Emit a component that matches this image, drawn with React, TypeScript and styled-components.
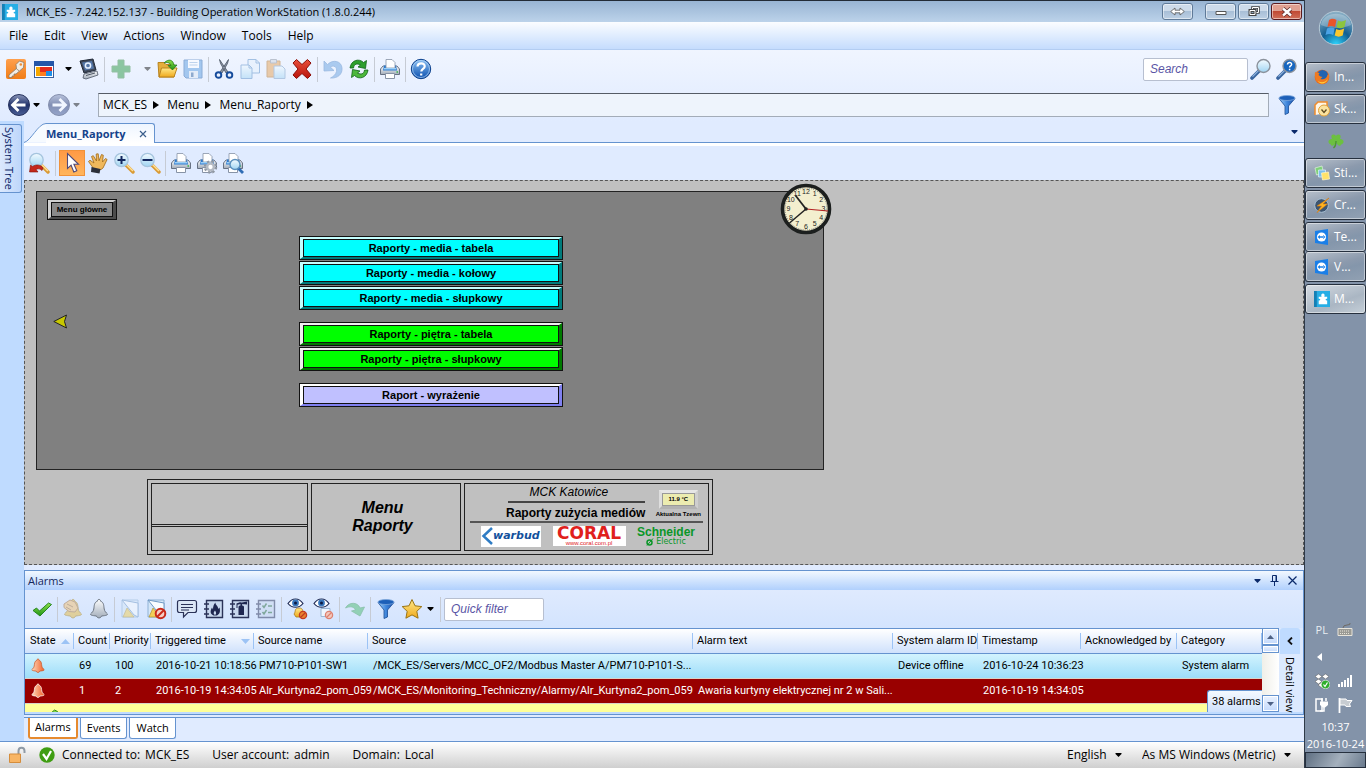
import React from "react";
import styled, { createGlobalStyle, css } from "styled-components";

const ui = `"Open Sans", "Noto Sans", sans-serif`;
const data = `Roboto, "Liberation Sans", sans-serif`;
const arial = `"Liberation Sans", Arial, sans-serif`;
const line = "#6593cf";

const Global = createGlobalStyle`
  *, *::before, *::after { box-sizing: border-box; }
  html, body { margin: 0; padding: 0; }
  body { font: 12px/16px ${ui}; color: #000; background: #e0ebff; }
  button, input, select { font: inherit; color: inherit; margin: 0; }
  button { background: none; border: 0; padding: 0; white-space: nowrap; }
  svg { display: block; flex: none; }
`;

/* ---------- shell ---------- */
const Screen = styled.div`
  display: flex;
  min-height: 100vh;
`;
const Workstation = styled.div`
  flex: 1;
  min-width: 0;
  display: flex;
  flex-direction: column;
  border-right: 1px solid #2f3a48;
`;
const TitleBar = styled.header`
  height: 22px;
  display: flex;
  align-items: center;
  padding: 0 2px 0 2px;
  gap: 8px;
  border-top: 1px solid #222b36;
  background: linear-gradient(#98b4d3, #bcd3ea);
`;
const Title = styled.h1`
  flex: 1;
  margin: 0;
  font-size: 11px;
  line-height: 16px;
  font-weight: 400;
`;
const WindowButtons = styled.div`
  display: flex;
  gap: 2px;
`;
const WindowButton = styled.button<{ $close?: boolean; $apart?: boolean }>`
  width: 31px;
  height: 17px;
  display: flex;
  align-items: center;
  justify-content: center;
  border: 1px solid ${(p) => (p.$close ? "#5b1a1e" : "#5f7a98")};
  border-radius: 3px;
  margin-right: ${(p) => (p.$apart ? "10px" : "0")};
  box-shadow: inset 0 0 0 1px rgba(255, 255, 255, 0.5);
  background: ${(p) =>
    p.$close
      ? "linear-gradient(#e0a091 0 45%, #c04a35 50%, #d0705a)"
      : "linear-gradient(#cddbea 0 45%, #a9bfd7 50%, #bdd0e4)"};
`;
const MenuBar = styled.nav`
  height: 28px;
  display: flex;
  align-items: center;
  gap: 16px;
  padding: 0 9px;
  border-bottom: 1px solid #b3cdf2;
  background: linear-gradient(#fbfdff, #c5dcfd);
`;
const Toolbars = styled.div`
  background: linear-gradient(#f0f5ff, #e0ebff);
`;
const ToolRow = styled.div<{ $pad: number; $height: number }>`
  display: flex;
  align-items: center;
  height: ${(p) => p.$height}px;
  padding: 0 4px 0 ${(p) => p.$pad}px;
`;
const IconPair = styled.div`
  display: flex;
  gap: 2px;
`;
const IconButton = styled.button<{ $active?: boolean; $dim?: boolean }>`
  width: 26px;
  height: 26px;
  flex: none;
  display: flex;
  align-items: center;
  justify-content: center;
  opacity: ${(p) => (p.$dim ? 0.5 : 1)};
  ${(p) =>
    p.$active &&
    css`
      border: 1px solid #f0923a;
      background: linear-gradient(#ff9a45, #ffb55c);
    `}
`;
const CaretButton = styled.button<{ $w?: number; $dim?: boolean }>`
  width: ${(p) => p.$w ?? 12}px;
  height: 24px;
  flex: none;
  display: flex;
  align-items: center;
  justify-content: flex-end;
  padding-right: 3px;
  opacity: ${(p) => (p.$dim ? 0.45 : 1)};
`;
const Divider = styled.span<{ $wide?: boolean }>`
  width: 1px;
  height: 25px;
  flex: none;
  margin: 0 ${(p) => (p.$wide ? 3 : 2)}px;
  background: #c6cbd4;
`;
const Spacer = styled.span`
  flex: 1;
`;
const TextBox = styled.input<{ $w: number }>`
  width: ${(p) => p.$w}px;
  height: 23px;
  border: 1px solid #b7bfd0;
  border-radius: 2px;
  padding: 0 6px;
  background: #fff;
  font: italic 12px/16px ${arial};
  &::placeholder { color: #5a55a5; opacity: 1; }
`;
const History = styled.div`
  display: flex;
  align-items: center;
  margin-right: 4px;
`;
const NavButton = styled(IconButton)`
  width: 24px;
  height: 24px;
`;
const Address = styled.nav`
  flex: 1;
  display: flex;
  align-items: center;
  height: 24px;
  margin: 0 5px 0 11px;
  padding-left: 4px;
  border: 1px solid #a3acb8;
  border-top-color: #555c66;
  background: #eef4fc;
`;
const Crumb = styled.button`
  display: flex;
  align-items: center;
  gap: 6px;
  margin-right: 8px;
`;

/* ---------- workspace ---------- */
const Body = styled.div`
  flex: 1;
  display: flex;
  min-height: 0;
`;
const Rail = styled.aside`
  width: 24px;
  flex: none;
  padding-top: 3px;
  background: #bfdbff;
`;
const RailTab = styled.button`
  width: 22px;
  height: 69px;
  display: flex;
  align-items: center;
  justify-content: center;
  padding-right: 3px;
  border: 1px solid ${line};
  border-left: 0;
  border-radius: 0 3px 3px 0;
  background: linear-gradient(90deg, #dce9fd, #bdd6fb);
  color: #0b1f66;
  font-size: 11px;
  writing-mode: vertical-rl;
`;
const Content = styled.main`
  flex: 1;
  min-width: 0;
  display: flex;
  flex-direction: column;
`;
const DocTabs = styled.div`
  height: 25px;
  display: flex;
  align-items: flex-end;
  border-bottom: 3px solid #fff;
`;
const DocTab = styled.div`
  display: flex;
  align-items: center;
  gap: 13px;
  width: 109px;
  height: 20px;
  border: solid ${line};
  border-width: 1px 1px 0 0;
  border-radius: 0 3px 0 0;
  background: linear-gradient(#eef5ff, #fff);
`;
const DocTabName = styled.button`
  color: #15428b;
  font-size: 11px;
  font-weight: 700;
`;
const TabFill = styled.div`
  flex: 1;
  height: 22px;
  display: flex;
  align-items: center;
  justify-content: flex-end;
  padding-right: 6px;
  border-bottom: 1px solid ${line};
`;
const Canvas = styled.section`
  position: relative;
  flex: 1;
  padding: 10px 11px 8px;
  border: 1px dashed #555;
  background: #c0c0c0;
  font-family: ${arial};
`;
const Panel = styled.div`
  width: 788px;
  min-height: 279px;
  border: 1px solid #222;
  background: #808080;
`;
const PanelGrid = styled.div`
  display: grid;
  grid-template-columns: 1fr 264px 1fr;
  align-items: center;
  margin-top: 16px;
  padding-left: 2px;
`;
const PanelTop = styled.div`
  display: flex;
  padding: 7px 10px 0;
`;
const ArrowButton = styled.button`
  justify-self: start;
  margin-left: 14px;
`;
const ButtonStack = styled.div`
  display: flex;
  flex-direction: column;
  gap: 12px;
`;
const ButtonGroup = styled.div`
  display: flex;
  flex-direction: column;
  gap: 1px;
`;
const Bevel = styled.button<{ $face: string; $lit: string; $shade: string; $small?: boolean }>`
  width: ${(p) => (p.$small ? "70px" : "100%")};
  height: ${(p) => (p.$small ? 21 : 24)}px;
  display: flex;
  border: 1px solid #111;
  font: 700 ${(p) => (p.$small ? "8px" : "11px")} / 16px ${arial};
  & > span {
    flex: 1;
    display: flex;
    border-style: solid;
    border-width: 2px 3px;
    border-color: ${(p) => `${p.$lit} ${p.$shade} ${p.$shade} ${p.$lit}`};
  }
  & > span > span {
    flex: 1;
    display: flex;
    align-items: center;
    justify-content: center;
    border: 1px solid #111;
    background: ${(p) => p.$face};
  }
`;
const Clock = styled.div`
  position: absolute;
  left: 755px;
  top: 2px;
`;
const TitleBlock = styled.div`
  display: flex;
  gap: 3px;
  width: 566px;
  height: 76px;
  margin: 9px 0 0 111px;
  padding: 3px;
  border: 1px solid #222;
`;
const Cell = styled.div<{ $w?: number }>`
  flex: ${(p) => (p.$w ? `0 0 ${p.$w}px` : "1")};
  display: flex;
  flex-direction: column;
  border: 1px solid #222;
`;
const Rule = styled.div`
  height: 3px;
  margin-top: 40px;
  border: solid #222;
  border-width: 1px 0;
`;
const SheetName = styled.h2`
  margin: auto;
  padding-right: 7px;
  font: italic 700 16px/18px ${arial};
  text-align: center;
`;
const Summary = styled.div`
  display: flex;
  justify-content: space-between;
  margin: 0 5px;
  padding: 0 2px 0 36px;
  height: 39px;
  border-bottom: 2px solid #555;
`;
const Heading = styled.div`
  display: flex;
  flex-direction: column;
  align-items: flex-end;
  font: 700 12px/20px ${arial};
`;
const Site = styled.span`
  width: 137px;
  padding-right: 16px;
  border-bottom: 2px solid #444;
  font: italic 400 12px/17px ${arial};
  text-align: center;
`;
const Gauge = styled.div`
  display: flex;
  flex-direction: column;
  align-items: center;
  padding-top: 6px;
  font: 700 6px/10px ${arial};
`;
const GaugeBox = styled.div`
  width: 39px;
  height: 19px;
  border: 3px solid #dcdcdc;
  border-color: #e6e6e6 #cfcfcf #b2b2b2 #dedede;
  background: #ececb0;
  box-shadow: inset 0 0 0 1px #999;
  line-height: 13px;
  text-align: center;
`;
const Logos = styled.div`
  display: flex;
  align-items: center;
  justify-content: space-between;
  padding: 0 13px 0 16px;
  height: 26px;
`;
const Warbud = styled.div`
  width: 60px;
  height: 21px;
  display: flex;
  align-items: center;
  background: #fff;
  color: #12509c;
  font: italic 700 11px/12px "DejaVu Sans", sans-serif;
`;
const Coral = styled.div`
  width: 73px;
  height: 20px;
  background: #fff;
  color: #e0201c;
  text-align: center;
  font: 700 17px/14px "DejaVu Sans", sans-serif;
  & > small { display: block; font: 6px/6px ${arial}; }
`;
const Schneider = styled.div`
  width: 58px;
  color: #0a9628;
  font: 700 12px/11px ${arial};
  & > small {
    display: flex;
    justify-content: center;
    align-items: center;
    gap: 2px;
    font: 8px/8px "DejaVu Sans", sans-serif;
  }
`;

/* ---------- alarms ---------- */
const AlarmPane = styled.section`
  margin-top: 5px;
  border: 1px solid ${line};
  background: #bfdbff;
  padding-bottom: 2px;
`;
const PaneTitle = styled.div`
  height: 19px;
  display: flex;
  align-items: center;
  gap: 9px;
  padding: 0 6px 0 3px;
  background: linear-gradient(#f2f8ff, #b0d0fd);
  color: #15285c;
  & > h2 { flex: 1; margin: 0; font: inherit; font-size: 11px; }
`;
const PaneTools = styled(ToolRow)`
  background: linear-gradient(#dfeafe, #d3e4fe);
`;
const ListArea = styled.div`
  display: flex;
  height: 84px;
`;
const TableWrap = styled.div`
  position: relative;
  flex: 1;
  min-width: 0;
  overflow: hidden;
`;
const Table = styled.table`
  width: 100%;
  table-layout: fixed;
  border-collapse: separate;
  border-spacing: 0;
  font: 11px/14px ${data};
  white-space: nowrap;
`;
const Th = styled.th<{ $w?: number }>`
  width: ${(p) => (p.$w ? `${p.$w}px` : "auto")};
  height: 26px;
  padding: 0;
  border: solid ${line};
  border-width: 1px 0;
  background: linear-gradient(#fff, #cfe1fc);
  font-weight: 400;
  text-align: left;
  & > span {
    display: flex;
    align-items: center;
    justify-content: space-between;
    height: 16px;
    padding: 0 3px 0 4px;
    border-right: 1px solid #9cc3f5;
  }
  &:first-child > span { padding-left: 5px; }
`;
const Row = styled.tr<{ $kind: "system" | "critical" | "ok" }>`
  height: 25px;
  color: ${(p) => (p.$kind === "critical" ? "#fff" : "#000")};
  background: ${(p) =>
    p.$kind === "system"
      ? "linear-gradient(#d2f3fe, #9bdcf9)"
      : p.$kind === "critical"
        ? "#990000"
        : "#ffff99"};
  & > td {
    padding: 0 0 0 5px;
    border-bottom: 1px solid #d9d3c8;
  }
`;
const OkMark = styled.span`
  display: block;
  padding-left: 7px;
`;
const CountTip = styled.div`
  position: absolute;
  right: 0;
  bottom: 0;
  width: 55px;
  height: 22px;
  padding-left: 4px;
  border: solid ${line};
  border-width: 1px 0 0 1px;
  border-radius: 3px 0 0 0;
  background: linear-gradient(#f4f9ff, #cfe1fc);
  font: 11px/22px ${data};
  white-space: nowrap;
`;
const Scroll = styled.div`
  width: 17px;
  flex: none;
  display: flex;
  flex-direction: column;
  background: linear-gradient(90deg, #f0efe8, #fff);
`;
const ScrollPart = styled.button<{ $h: number }>`
  height: ${(p) => p.$h}px;
  display: flex;
  align-items: center;
  justify-content: center;
  border: 1px solid ${line};
  box-shadow: inset 0 0 0 1px #fff;
  background: linear-gradient(#eaf2ff, #c4dafc);
`;
const DetailStrip = styled.aside`
  width: 24px;
  flex: none;
  display: flex;
  flex-direction: column;
  align-items: center;
  padding-right: 3px;
  background: #dce9fe;
`;
const DetailToggle = styled.button`
  width: 20px;
  height: 26px;
  flex: none;
  display: flex;
  align-items: center;
  justify-content: center;
  border-radius: 3px 3px 0 0;
  background: #bfdbff;
`;
const DetailLabel = styled.span`
  margin-top: 3px;
  font-size: 11px;
  writing-mode: vertical-rl;
  white-space: nowrap;
`;
const BottomTabs = styled.div`
  height: 24px;
  display: flex;
  gap: 2px;
  margin-top: 2px;
  padding: 0 4px 2px;
  border-top: 1px solid ${line};
  background: #e0ebff;
`;
const BottomTab = styled.button<{ $on?: boolean }>`
  padding: 0 ${(p) => (p.$on ? 5 : 6)}px 1px;
  height: 21px;
  border: solid ${(p) => (p.$on ? "#e68a2e" : line)};
  border-width: ${(p) => (p.$on ? "0 2px 2px" : "0 1px 1px")};
  border-radius: 0 0 3px 3px;
  background: #fff;
  font-size: 11px;
`;
const StatusBar = styled.footer`
  height: 27px;
  display: flex;
  align-items: center;
  padding: 0 13px 0 8px;
  border-top: 1px solid ${line};
  background: linear-gradient(#fff, #cfcfcf);
`;
const StatusItem = styled.span`
  display: flex;
  gap: 5px;
  margin-right: 23px;
  white-space: nowrap;
`;
const StatusIcons = styled.span`
  display: flex;
  align-items: center;
  gap: 13px;
  margin-right: 7px;
`;
const Picker = styled.label`
  display: flex;
  align-items: center;
  gap: 8px;
  margin-left: 20px;
  & > select {
    appearance: none;
    padding: 0;
    border: 0;
    background: none;
  }
`;

/* ---------- taskbar ---------- */
const Taskbar = styled.aside`
  width: 61px;
  flex: none;
  display: flex;
  flex-direction: column;
  background: #8393a9;
  color: #fff;
  font-size: 12px;
`;
const Orb = styled.button`
  height: 62px;
  display: flex;
  justify-content: center;
  padding-top: 10px;
`;
const Tasks = styled.div`
  display: flex;
  flex-direction: column;
  gap: 2px;
`;
const Task = styled.button<{ $bare?: boolean; $front?: boolean; $joined?: boolean }>`
  height: 30px;
  display: flex;
  align-items: center;
  gap: 4px;
  padding-left: 8px;
  ${(p) =>
    p.$bare
      ? css`
          justify-content: center;
          padding: 0;
        `
      : css`
          border: 1px solid #26303e;
          border-radius: 3px;
          box-shadow: inset 0 0 0 1px rgba(255, 255, 255, 0.45);
          background: ${p.$front
            ? "linear-gradient(160deg, #d5dbe2, #aab6c3 60%, #c5cfd8)"
            : "linear-gradient(165deg, #b7c0cb, #8c9aad 45%, #8496ab 60%, #92a1b3)"};
        `}
  ${(p) =>
    p.$joined &&
    css`
      margin-top: -2px;
      border-top: 0;
    `}
`;
const Tray = styled.div`
  display: grid;
  grid-template-columns: 1fr 1fr;
  grid-template-rows: 30px 24px 24px 24px;
  justify-items: center;
  align-items: center;
  margin-top: auto;
  padding: 0 9px 0 5px;
`;
const TrayText = styled.span`
  font-size: 11px;
  color: #e8edf2;
`;
const Stamp = styled.time`
  display: flex;
  flex-direction: column;
  align-items: center;
  margin-top: 1px;
  font-size: 11px;
  line-height: 17px;
  white-space: nowrap;
`;
const Peek = styled.button`
  height: 16px;
  border: 1px solid #26303e;
  background: linear-gradient(120deg, #5f6f82, #a4b0bd 55%, #6a7a8d);
`;

/* ---------- icons ---------- */
const DefsSvg = styled.svg`
  position: absolute;
`;
const Defs = () => (
  <DefsSvg width="0" height="0" aria-hidden="true">
    <defs>
      <linearGradient id="blue" x2="0" y2="1"><stop stopColor="#8cc2f5" /><stop offset="1" stopColor="#0b4fae" /></linearGradient>
      <linearGradient id="navy" x2="0" y2="1"><stop stopColor="#8b97bb" /><stop offset=".5" stopColor="#22336b" /><stop offset="1" stopColor="#4a5f96" /></linearGradient>
      <linearGradient id="gold" x2="0" y2="1"><stop stopColor="#ffe98a" /><stop offset="1" stopColor="#efa91c" /></linearGradient>
      <linearGradient id="orange" x2="0" y2="1"><stop stopColor="#ffa04d" /><stop offset="1" stopColor="#f07d18" /></linearGradient>
      <linearGradient id="silver" x2="0" y2="1"><stop stopColor="#fbfcfd" /><stop offset="1" stopColor="#a3adba" /></linearGradient>
      <linearGradient id="glass" x2="0" y2="1"><stop stopColor="#f4fbff" /><stop offset="1" stopColor="#9fd4f2" /></linearGradient>
      <linearGradient id="green" x2="0" y2="1"><stop stopColor="#8fe04a" /><stop offset="1" stopColor="#1d9416" /></linearGradient>
      <linearGradient id="red" x2="0" y2="1"><stop stopColor="#e8503c" /><stop offset="1" stopColor="#b8140c" /></linearGradient>
      <linearGradient id="flame" x2="1" y2="0"><stop stopColor="#ffd9bc" /><stop offset="1" stopColor="#f0602a" /></linearGradient>
      <linearGradient id="funnel" x2="1" y2="0"><stop stopColor="#9fd0f8" /><stop offset=".5" stopColor="#3f86dc" /><stop offset="1" stopColor="#1a4fa8" /></linearGradient>
      <radialGradient id="orb" cy="1" r="1"><stop stopColor="#2fd6ff" /><stop offset=".45" stopColor="#125f92" /><stop offset="1" stopColor="#8fb3c8" /></radialGradient>
    </defs>
  </DefsSvg>
);

const Ico = ({ s = 22, w, children }: { s?: number; w?: number; children: React.ReactNode }) => (
  <svg width={w ?? s} height={s} viewBox={`0 0 ${w ?? s} ${s}`} fill="none" aria-hidden="true">{children}</svg>
);
const Caret = ({ c = "#000" }: { c?: string }) => (
  <Ico s={4} w={7}><path d="M.5 0h6v1L3.500 4 .5 1z" fill={c} /></Ico>
);
const Puzzle = ({ s = 17 }: { s?: number }) => (
  <svg width={s} height={s} viewBox="0 0 17 17" aria-hidden="true">
    <path d="M0 0h17v17H0z" fill="#27aee5" /><path d="M0 0h3v17H0z" fill="#1580b5" />
    <path d="M8 6C6.300 1.500 12.700 1.500 11 6h3v2.300c-2.200-.3-2.200 2 0 1.700V14H5v-4c2.200.3 2.200-2 0-1.700V6z" fill="#fff" />
  </svg>
);
const KeyIcon = () => (
  <Ico><rect x="1" y="1" width="20" height="20" rx="2" fill="url(#orange)" />
    <path d="M11.500 10.500 4 17v2.500h3V18h2v-2h2l3.500-3" fill="#f2eee6" stroke="#8a7b68" strokeWidth=".8" />
    <path d="M11 6.500 14.500 3l4.500 1.500-.5 5-4 3.500-3-2z" fill="#f2eee6" stroke="#8a7b68" strokeWidth=".8" /><circle cx="15.800" cy="6.500" r="1.300" fill="#ef8d35" /></Ico>
);
const LayoutIcon = () => (
  <Ico><rect x="1.500" y="3.500" width="19" height="16" fill="#fff" stroke="#3b5f9c" /><path d="M1 3h20v5H1z" fill="#2456a8" />
    <path d="M3 9h4v9H3z" fill="#f6a800" /><path d="M7 9h12v5H7z" fill="#e62c1c" /><path d="M7 14h6v4H7z" fill="#ff7d1e" /><path d="M13 13h6v5h-6z" fill="#1f8fe8" /></Ico>
);
const DeviceIcon = () => (
  <Ico><path d="m3 3 13-2 3 11-12 3z" fill="#3f495a" stroke="#222a38" /><path d="m5 4.500 10-1.500 2 7.500-9 2z" fill="#5577a8" />
    <circle cx="11" cy="7.500" r="2.600" stroke="#e8f2ff" strokeWidth="1.500" /><path d="m7 16 13-3 1 4-12 4-3-1z" fill="url(#silver)" stroke="#4c5664" strokeWidth=".8" /><path d="m9 17.500 9-2.500" stroke="#4c5664" /></Ico>
);
const PlusIcon = () => <Ico><path d="M8 2h6v6h6v6h-6v6H8v-6H2V8h6z" fill="#2c9a45" stroke="#3e8f4b" /></Ico>;
const FolderIcon = () => (
  <Ico><path d="M2 4.500h6l2 2h8V19H3z" fill="#e5ae3c" stroke="#b98420" /><path d="M5.500 10H21l-3 9H3z" fill="url(#gold)" stroke="#b98420" />
    <path d="M8 5c5-5 9-3 10 2h3l-4.500 5L12 7.500h3C14 4.500 11 4 8 5z" fill="url(#green)" stroke="#187018" strokeWidth=".7" /></Ico>
);
const SaveIcon = () => (
  <Ico><path d="M2 2h18v18H4l-2-2z" fill="#5c9de0" stroke="#2d68b0" /><path d="M6 2h11v8H6z" fill="#fff" /><path d="M7.500 4.500h8m-8 2.500h8" stroke="#8fb4dc" /><path d="M7 13h9v7H7z" fill="#dfe8f3" /><path d="M9 14.500h2.500V19H9z" fill="#34659e" /></Ico>
);
const CutIcon = () => (
  <Ico><path d="m6.500 1.500 1 4L13 15l2-1zM15.500 1.500l-1 4L9 15l-2-1z" fill="#8c96a6" stroke="#3c4656" strokeWidth=".7" />
    <circle cx="5.500" cy="17" r="2.800" stroke="#164c9c" strokeWidth="1.900" /><circle cx="16.500" cy="17" r="2.800" stroke="#164c9c" strokeWidth="1.900" /></Ico>
);
const CopyIcon = () => (
  <Ico><path d="M9 1.500h8l3.500 3.500v10H9z" fill="#e4f1fd" stroke="#5b8fc8" /><path d="M2 7h8l3 3v10.500H2z" fill="url(#glass)" stroke="#5b8fc8" /><path d="M10 7v3h3M17 1.500V5h3.500" stroke="#5b8fc8" /></Ico>
);
const PasteIcon = () => (
  <Ico><path d="M2 3h13v16H2z" fill="#e6a255" stroke="#b67a35" /><path d="M5.500 1.500h6v3.500h-6z" fill="#ccd3dc" stroke="#8a93a0" /><path d="M9 8h8l3 3v9.500H9z" fill="url(#glass)" stroke="#7a9fc8" /></Ico>
);
const DeleteIcon = () => <Ico><path d="m2 5 3.500-3.500L11 6.500l5.500-5L20 5l-5 6 5 6-3.500 3.500L11 15.500l-5.500 5L2 17l5-6z" fill="url(#red)" stroke="#8e0e08" /></Ico>;
const UndoIcon = () => <Ico><path d="M2 3v10l10-.5-3.500-3.200c3-3 7 0 6 4.200-.7 3-3 5-6 6.500C16 20.500 20.500 16 20 10c-.6-7-9-9-14.500-3.500z" fill="#6aa3e0" stroke="#4b82c4" strokeWidth=".8" /></Ico>;
const RefreshIcon = () => (
  <Ico><path d="M2 10C3 2 11 0 15.500 4.500l3-2-1 8-7.500-1.500 2.500-2C9 5 6 6 5.500 10z" fill="#2d9f2d" stroke="#0f6218" strokeWidth=".8" />
    <path d="M20 12c-1 8-9 10-13.500 5.500l-3 2 1-8L12 13l-2.500 2c3.500 2 6.500 1 7-3z" fill="#4db83c" stroke="#0f6218" strokeWidth=".8" /></Ico>
);
const PrinterParts = () => (
  <><path d="m4 8-2.500 3v5.500h19V11L18 8z" fill="url(#silver)" stroke="#5c6778" strokeWidth=".9" />
    <path d="M5 7.500h12l1 5H4z" fill="#2b7bd0" /><path d="M7 10V1.500h6l3 3V10z" fill="#fff" stroke="#8793a6" strokeWidth=".8" /><path d="M5 10h12v1.500H5z" fill="#9dd0f7" />
    <path d="M6.500 15.500h9v5h-9z" fill="#fff" stroke="#8793a6" /><path d="M17.500 14h1.500" stroke="#39b54a" strokeWidth="1.500" /></>
);
const PrintIcon = () => <Ico><PrinterParts /></Ico>;
const PrintSetupIcon = () => (
  <Ico><PrinterParts /><circle cx="14.500" cy="15" r="5.200" stroke="#9098a3" strokeWidth="3" strokeDasharray="2.200 1.900" /><circle cx="14.500" cy="15" r="3.400" fill="#fff" stroke="#b4bac3" strokeWidth="2.500" /></Ico>
);
const PreviewIcon = () => (
  <Ico><PrinterParts /><path d="m16 16 5 5" stroke="#2f6db5" strokeWidth="2.800" /><circle cx="13" cy="12.500" r="5" fill="url(#glass)" stroke="#5a8fbd" strokeWidth="1.400" /></Ico>
);
const HelpIcon = () => (
  <Ico><circle cx="11" cy="11" r="9.700" fill="url(#blue)" stroke="#0a3f8c" /><circle cx="11" cy="11" r="8.500" stroke="#b8d8f6" strokeWidth=".7" />
    <path d="M7.500 8.500c.3-4.300 7.500-4 7.200 0-.2 2.500-3.400 2.400-3.400 5M11.200 15.500v2" stroke="#fff" strokeWidth="2.200" /></Ico>
);
const LensIcon = ({ help }: { help?: boolean }) => (
  <Ico><path d="m9 13-7 7" stroke="#39659f" strokeWidth="3.600" strokeLinecap="round" /><path d="m8.500 12.700-6 6" stroke="#8fb3de" strokeWidth="1.200" />
    <circle cx="13.500" cy="8" r="6.500" fill={help ? "#1766c0" : "url(#glass)"} stroke="#8b929c" strokeWidth="1.400" />
    {help && <path d="M11.500 6.500c.2-2.700 4.300-2.500 4.100 0-.1 1.400-2 1.500-2 3M13.600 10.800v1.400" stroke="#fff" strokeWidth="1.500" />}</Ico>
);
const ZoomIcon = ({ kind }: { kind: "in" | "out" | "fit" }) => (
  <Ico><path d="m13 13 7 7" stroke="#d99a35" strokeWidth="3.400" strokeLinecap="round" /><path d="m13.500 12.500 6.500 6.500" stroke="#ffe093" strokeWidth="1.500" />
    <circle cx="8.500" cy="8" r="6.700" fill="url(#glass)" stroke="#a5c4de" strokeWidth="1.300" />
    {kind === "in" && <path d="M4.500 8h8m-4-4v8" stroke="#12265e" strokeWidth="2" />}
    {kind === "out" && <path d="M3.500 8h10" stroke="#12265e" strokeWidth="2" />}
    {kind === "fit" && <path d="m1.500 20 1-7 2 1.500c3.500-2.500 8.500-2 10.500 1.500l-1 2.500c-2-2-4-2-6-1l2 2.500z" fill="#c4281c" stroke="#831108" strokeWidth=".6" />}</Ico>
);
const BackIcon = ({ flip }: { flip?: boolean }) => (
  <Ico s={24}><circle cx="12" cy="12" r="10.500" fill="url(#navy)" stroke="#25315c" />
    <path d={flip ? "M5.500 12h12M12.500 6l6 6-6 6" : "M18.500 12h-12M11.500 6l-6 6 6 6"} stroke="#fff" strokeWidth="2.800" /></Ico>
);
const FunnelIcon = () => (
  <Ico><path d="M3 4.500 9 12v8.500l3.500-1.500v-7L19 4.500z" fill="url(#funnel)" stroke="#174a94" strokeWidth=".8" /><ellipse cx="11" cy="4" rx="8" ry="2.500" fill="#1c5fb8" stroke="#7ba6da" strokeWidth=".8" /></Ico>
);
const PointerIcon = () => <Ico><path d="M6.500 1.500v15l3.600-3.300 2.700 6.800 3-1.300-2.900-6.400h4.600z" fill="#fff" stroke="#4f4a78" strokeWidth="1.100" /></Ico>;
const HandIcon = () => (
  <Ico><path d="m5.500 15-4-5.500 1.500-1.300L7 11 4.500 4.500l1.800-.8L9.500 9l-.3-7 2-.2.8 7L14.500 2.500l1.800.7L15.500 10l3-3.500 1.600 1-4.100 8.500-2 1.500H7z" fill="#efb85c" stroke="#a16a17" strokeWidth=".8" /><path d="m4.500 15 9 2-1 4.500-8.500-1.500z" fill="#2b2f3a" /></Ico>
);
const CheckIcon = () => <Ico><path d="m2 12.500 3.500-2.500 3 3L17.500 5l3 1.500L9 18z" fill="url(#green)" stroke="#1b7d14" strokeWidth=".9" /></Ico>;
const bell = "M11 1.500c-1.400 0-1.600 1-1.600 1.700C6 4.300 6.300 8 5.800 11c-.4 2.500-1.800 3.500-3.300 5 0 1 1 1.500 6 2 .5 2.500 4.500 2.500 5 0 5-.5 6-1 6-2-1.500-1.500-2.900-2.500-3.300-5-.5-3-.2-6.700-3.600-7.800 0-.7-.2-1.700-1.600-1.700z";
const BellIcon = ({ fill = "url(#silver)", edge = "#6b7480", s = 22 }: { fill?: string; edge?: string; s?: number }) => (
  <svg width={s} height={s} viewBox="0 0 22 22" aria-hidden="true"><path d={bell} fill={fill} stroke={edge} /></svg>
);
const AckIcon = () => (
  <Ico><path d={bell} fill="#e8b93c" stroke="#a88420" /><path d="m2 6 6-4 5 2 3 6-3 4-6-.5-5-4z" fill="#f3c070" stroke="#a5743d" /><path d="m5 6 6 3M4 9l5 3" stroke="#a5743d" /></Ico>
);
const NoteIcon = ({ banned }: { banned?: boolean }) => (
  <Ico><path d="M3 2h16v17H3z" fill="#d5e7f8" stroke="#8fb2d6" /><path d="m4 19 4-9 7 9z" fill="#f2cf57" stroke="#b3922c" strokeWidth=".7" /><path d="m3 2 12 15 4 2V5z" fill="#f9fcff" stroke="#6f98c4" />
    {banned && <><circle cx="15.500" cy="15.500" r="4.800" fill="#f6cfc5" stroke="#c92a1a" strokeWidth="2" /><path d="m12 19 7-7" stroke="#c92a1a" strokeWidth="2" /></>}</Ico>
);
const CommentIcon = () => <Ico><path d="M3.500 2.500h15q2 0 2 2v8q0 2-2 2H12L7.500 19v-4.500h-4q-2 0-2-2v-8q0-2 2-2z" fill="#dbe6f5" stroke="#2b3358" strokeWidth="1.200" /><path d="M5 6.500h12M5 9.500h12M5 12h8" stroke="#2b3358" /></Ico>;
const BookIcon = ({ kind }: { kind: "fire" | "tool" | "list" }) => (
  <Ico><path d="M4.500 2.500h16v17h-16z" fill="#c9d8ee" stroke="#2b3358" strokeWidth="1.400" /><path d="M2 6h5M2 11h5M2 16h5" stroke="#2b3358" strokeWidth="1.500" />
    {kind === "fire" && <path d="M13.500 4.500c-.5 2.500 3 3.500 2.500 6.500l1.500-1.500c1 3.500.5 6.500-2.500 8h-3.500C8 16 8 13 10 9.500l1 2c0-3 .5-5 2.500-7zM13 12.500c-2 2-1.500 3.500 0 4.500 1.500-1 1.500-2.500 0-4.500z" fill="#1f2750" fillRule="evenodd" />}
    {kind === "tool" && <path d="M10.500 9q0-1.500 1.500-1.500h2.500Q16 7.500 16 9v8h-5.500zM12.500 4.500h1.500v3h-1.500zM8.500 5.500l4-1.500v2l-3 .8V10h-1zM14 4.500l5-1v3l-5-.5z" fill="#1f2750" />}
    {kind === "list" && <path d="m8.500 7.500 1.500 2 2.500-4M8.500 14l1.500 2 2.500-4M14 8h4M14 14.500h4" stroke="#2a6b3c" strokeWidth="1.500" />}</Ico>
);
const EyeIcon = ({ note }: { note?: boolean }) => (
  <Ico><path d="M1 5.500c4-6 11-6 15 0-4 5-11 5-15 0z" fill="#fff" stroke="#1f2b55" strokeWidth="1.200" /><circle cx="8.500" cy="5" r="3.400" fill="#3877bd" /><circle cx="8.500" cy="5" r="1.500" fill="#0e1c44" />
    {note ? <path d="M8 10.500h9v8H8z" fill="#eef6ff" stroke="#9bb8d6" /> : <path d="M7 16c2-2 0-6 5-6 5 0 3 4 5 6l-2 3H9z" fill="url(#gold)" stroke="#a97b18" strokeWidth=".8" />}
    <circle cx="16" cy="17" r="3.600" fill={note ? "#f3c9bd" : "#e8842e"} stroke={note ? "#dd8070" : "#c23a22"} strokeWidth="1.300" /><path d="m13.500 19.500 5-5" stroke={note ? "#dd8070" : "#c23a22"} strokeWidth="1.300" /></Ico>
);
const RedoIcon = () => <Ico><path d="M1.500 10C5 3.500 14 4 16 10l4.500-1L16 18l-8.500-5 4-1C10 8.500 6 8 1.500 10z" fill="#4dbb70" stroke="#3c9b5a" strokeWidth=".8" /></Ico>;
const StarIcon = () => <Ico><path d="m11 1.500 3 6.300 6.800.8-5 4.700 1.300 6.900L11 16.900l-6.100 3.300 1.300-6.900-5-4.700 6.800-.8z" fill="url(#gold)" stroke="#9a7414" /></Ico>;
const LockIcon = () => (
  <Ico s={18}><path d="M10.500 8V5c0-4.500 6-4.500 6 0v2" stroke="#8f9aa5" strokeWidth="2" /><path d="M1.500 8h11v8.500h-11z" fill="#f8b565" stroke="#d58d3c" /></Ico>
);
const OkIcon = () => <Ico s={16}><circle cx="8" cy="8" r="7.700" fill="#3f9d12" /><path d="m4 7 3.500 5L12 4" stroke="#fff" strokeWidth="2.200" /></Ico>;

const marks: [string, number, number][] = Array.from({ length: 12 }, (_, i) => {
  const a = ((i + 1) * Math.PI) / 6;
  return [String(i + 1), 26 + Math.sin(a) * 17.500, 28 - Math.cos(a) * 17.500];
});
const ClockFace = () => (
  <svg width="52" height="52" viewBox="0 0 52 52" aria-label="Clock">
    <circle cx="26" cy="26" r="23.500" fill="#f3efcf" stroke="#1c1f1e" strokeWidth="3.600" />
    <circle cx="26" cy="26" r="21" fill="none" stroke="#777" strokeWidth="1" strokeDasharray="1 1.200" />
    {marks.map(([n, x, y]) => (
      <text key={n} x={x} y={y} fontSize="7" fontFamily="Liberation Sans" textAnchor="middle" fill="#222">{n}</text>
    ))}
    <path d="M26 26 15.500 12.500" stroke="#222" strokeWidth="1.800" /><path d="M26 26 9.500 40" stroke="#222" strokeWidth="1.500" />
    <path d="m26 26 22 2" stroke="#b32222" strokeWidth="1.200" /><circle cx="26" cy="26" r="1.800" fill="#222" />
  </svg>
);

const StartOrb = () => (
  <Ico s={36}><circle cx="18" cy="18" r="16.700" fill="url(#orb)" stroke="#b6c9d6" /><path d="M3 15C5 0 31 0 33 15c-8 4-22 4-30 0z" fill="#fff" opacity=".28" />
    <path d="M11 10c3-2 5-1.500 7.500 0L17 17c-3-1.500-5-1.500-7.500 0z" fill="#e8552b" /><path d="M20 10.500c3 1.500 5 1 8-.5L26.500 17c-3 1.500-5 1.500-8 .3z" fill="#8cc63e" />
    <path d="M9 18.500c3-1.500 5-1.500 7.700 0L15.200 25c-3-1.500-5-1.500-7.700 0z" fill="#4aa3e6" /><path d="M18.200 19c3 1.500 5 1 8-.5L24.700 25.500c-3 1.500-5 1.500-8 0z" fill="#fbc82e" /></Ico>
);
const Firefox = () => (
  <Ico s={16}><circle cx="8" cy="8" r="7.300" fill="#e8661b" /><circle cx="8.500" cy="6.500" r="5.500" fill="#2263b0" /><path d="M1 3c2 1 3 .5 4.500 1L4.500 6l2 1.500 2 .5-2 2c3 1 6 0 7-4l1.500-1c1 6-3 10-7 10C3 15 0 10 1 3z" fill="#f07a1f" /><path d="M4 12c3 2 7 2 10-2-2 5-8 6-10 2z" fill="#ffd03a" /></Ico>
);
const Outlook = () => (
  <Ico s={16}><path d="M1 14V4l3-3h9v11" fill="#fff6e6" stroke="#f08c2c" strokeWidth="1.500" /><circle cx="10" cy="9.500" r="5.500" fill="#fbe3a0" stroke="#e3a33a" /><path d="m7.500 8.500 2.500 3 2.500-3" stroke="#5d4a20" strokeWidth="1.300" /></Ico>
);
const Clover = () => (
  <Ico s={16}><g fill="#6cc040"><path d="M8 8C3 7 2 2 5 1.500 7 1 8 3 8 3s1-2 3-1.500C14 2 13 7 8 8z" /><path d="M8 8c-2-4-7-2-7.500 0S2 11.500 3 11.500c0 2 4 2 5-3.500z" /><path d="M8 8c2-4 7-2 7.500 0S14 11.500 13 11.500c0 2-4 2-5-3.500z" /></g><path d="M8 8q0 5-2.500 7" stroke="#4c9a2b" strokeWidth="1.500" /></Ico>
);
const Notes = () => (
  <Ico s={16}><path d="m1 3 7-2 1.500 7-7 2z" fill="#7fd07a" stroke="#e0f5de" strokeWidth=".7" /><path d="M4.500 5h7v7h-7z" fill="#7fc0ea" stroke="#e4f3fc" strokeWidth=".7" /><path d="m7.500 8 7-1 1 7-7 1z" fill="#ffe26a" stroke="#fff6cc" strokeWidth=".7" /></Ico>
);
const Bolt = () => <Ico s={16}><circle cx="7.500" cy="8.500" r="6.800" fill="#3d5570" stroke="#a9c0d4" /><path d="m15 1-12 8h4.500L3 15.500 13.500 7H9z" fill="#ffb41f" stroke="#d77a0e" strokeWidth=".6" /></Ico>;
const TeamViewer = () => <Ico s={16}><path d="m1 2 13-2v16L1 14z" fill="#1a7fe8" /><circle cx="7.500" cy="8" r="4.600" fill="#fff" /><path d="M3.500 8 6 6v4zM11.500 8 9 6v4zM5.500 7.300h4v1.400h-4z" fill="#1a7fe8" /></Ico>;

/* ---------- data ---------- */
const columns: { name: string; w?: number; sort?: "up" | "down" }[] = [
  { name: "State", w: 49, sort: "up" }, { name: "Count", w: 36 }, { name: "Priority", w: 41 },
  { name: "Triggered time", w: 103, sort: "down" }, { name: "Source name", w: 114 }, { name: "Source" },
  { name: "Alarm text", w: 200 }, { name: "System alarm ID", w: 85 }, { name: "Timestamp", w: 103 },
  { name: "Acknowledged by", w: 96 }, { name: "Category", w: 85 },
];
const rows: { kind: "system" | "critical"; cells: string[] }[] = [
  { kind: "system", cells: ["69", "100", "2016-10-21 10:18:56", "PM710-P101-SW1", "/MCK_ES/Servers/MCC_OF2/Modbus Master A/PM710-P101-S...", "", "Device offline", "2016-10-24 10:36:23", "", "System alarm"] },
  { kind: "critical", cells: ["1", "2", "2016-10-19 14:34:05", "Alr_Kurtyna2_pom_059", "/MCK_ES/Monitoring_Techniczny/Alarmy/Alr_Kurtyna2_pom_059", "Awaria kurtyny elektrycznej nr 2 w Sali...", "", "2016-10-19 14:34:05", "", ""] },
];
const cyan = { $face: "#00ffff", $lit: "#c4ffff", $shade: "#007b7b" };
const lime = { $face: "#00ff00", $lit: "#f0f0f0", $shade: "#007a00" };
const lilac = { $face: "#c0c0ff", $lit: "#ffffff", $shade: "#8080f0" };
const reports = [
  { tone: cyan, names: ["Raporty - media - tabela", "Raporty - media - kołowy", "Raporty - media - słupkowy"] },
  { tone: lime, names: ["Raporty - piętra - tabela", "Raporty - piętra - słupkowy"] },
  { tone: lilac, names: ["Raport - wyrażenie"] },
];

export default function App() {
  return (
    <Screen>
      <Global />
      <Defs />
      <Workstation>
        <TitleBar>
          <Puzzle s={16} />
          <Title>MCK_ES - 7.242.152.137 - Building Operation WorkStation (1.8.0.244)</Title>
          <WindowButtons>
            <WindowButton $apart aria-label="Span"><Ico s={9} w={15}><path d="M.7 4.500 5 1v2.200h5V1l4.300 3.500L10 8V5.800H5V8z" fill="#fff" stroke="#555" strokeWidth=".8" /></Ico></WindowButton>
            <WindowButton aria-label="Minimize"><Ico s={9} w={12}><path d="M1 4.500h10v3H1z" fill="#fff" stroke="#555" /></Ico></WindowButton>
            <WindowButton aria-label="Restore"><Ico s={11} w={12}><path d="M4.500 1.500h6v5h-6z" stroke="#444" strokeWidth="2.600" /><path d="M4.500 1.500h6v5h-6z" stroke="#fff" /><path d="M2 4.500h5v4H2z" fill="#8fa6bf" stroke="#444" strokeWidth="3" /><path d="M2 4.500h5v4H2z" stroke="#fff" /></Ico></WindowButton>
            <WindowButton $close aria-label="Close"><Ico s={10} w={12}><path d="m2 1.500 8 7m0-7-8 7" stroke="#5a2a2a" strokeWidth="4" /><path d="m2 1.500 8 7m0-7-8 7" stroke="#fff" strokeWidth="2.400" /></Ico></WindowButton>
          </WindowButtons>
        </TitleBar>
        <MenuBar>
          {["File", "Edit", "View", "Actions", "Window", "Tools", "Help"].map((m) => <button key={m}>{m}</button>)}
        </MenuBar>
        <Toolbars>
          <ToolRow $pad={3} $height={38}>
            <IconPair>
              <IconButton aria-label="Log on"><KeyIcon /></IconButton>
              <IconButton aria-label="Layout"><LayoutIcon /></IconButton>
            </IconPair>
            <CaretButton $w={18} aria-label="Layouts"><Caret /></CaretButton>
            <IconButton aria-label="Device"><DeviceIcon /></IconButton>
            <Divider $wide />
            <IconButton $dim aria-label="New"><PlusIcon /></IconButton>
            <CaretButton $w={20} $dim aria-label="New options"><Caret /></CaretButton>
            <IconButton aria-label="Open"><FolderIcon /></IconButton>
            <IconButton $dim aria-label="Save"><SaveIcon /></IconButton>
            <Divider />
            <IconButton aria-label="Cut"><CutIcon /></IconButton>
            <IconButton $dim aria-label="Copy"><CopyIcon /></IconButton>
            <IconButton $dim aria-label="Paste"><PasteIcon /></IconButton>
            <IconButton aria-label="Delete"><DeleteIcon /></IconButton>
            <Divider />
            <IconButton $dim aria-label="Undo"><UndoIcon /></IconButton>
            <IconButton aria-label="Refresh"><RefreshIcon /></IconButton>
            <Divider />
            <IconButton aria-label="Print"><PrintIcon /></IconButton>
            <Divider />
            <IconButton aria-label="Help"><HelpIcon /></IconButton>
            <Spacer />
            <TextBox $w={105} placeholder="Search" aria-label="Search" />
            <IconButton aria-label="Find"><LensIcon /></IconButton>
            <IconButton aria-label="Search help"><LensIcon help /></IconButton>
          </ToolRow>
          <ToolRow $pad={7} $height={33}>
            <History>
              <NavButton aria-label="Back"><BackIcon /></NavButton>
              <CaretButton aria-label="Back history"><Caret /></CaretButton>
            </History>
            <History>
              <NavButton $dim aria-label="Forward"><BackIcon flip /></NavButton>
              <CaretButton $dim aria-label="Forward history"><Caret /></CaretButton>
            </History>
            <Address aria-label="Path">
              {["MCK_ES", "Menu", "Menu_Raporty"].map((c) => (
                <Crumb key={c}>{c}<Ico s={8} w={6}><path d="M0 0v8l6-4z" fill="#000" /></Ico></Crumb>
              ))}
            </Address>
            <IconButton aria-label="Filter"><FunnelIcon /></IconButton>
          </ToolRow>
        </Toolbars>
        <Body>
          <Rail><RailTab>System Tree</RailTab></Rail>
          <Content>
            <DocTabs>
              <svg width="22" height="20" viewBox="0 0 22 20"><path d="M0 19.500C8 18 12 .5 22 .5v19z" fill="#f6faff" /><path d="M0 19.500C7 18 14 .5 22 .5" fill="none" stroke={line} /></svg>
              <DocTab>
                <DocTabName>Menu_Raporty</DocTabName>
                <button aria-label="Close tab"><Ico s={8}><path d="m1 1 6 6m0-6L1 7" stroke="#3b5f8c" strokeWidth="1.200" /></Ico></button>
              </DocTab>
              <TabFill><button aria-label="Open tabs"><Caret c="#0b2a6b" /></button></TabFill>
            </DocTabs>
            <ToolRow $pad={2} $height={34}>
              <IconButton aria-label="Fit"><ZoomIcon kind="fit" /></IconButton>
              <Divider $wide />
              <IconButton $active aria-label="Select"><PointerIcon /></IconButton>
              <IconButton aria-label="Pan"><HandIcon /></IconButton>
              <IconButton aria-label="Zoom in"><ZoomIcon kind="in" /></IconButton>
              <IconButton aria-label="Zoom out"><ZoomIcon kind="out" /></IconButton>
              <Divider />
              <IconButton aria-label="Print graphic"><PrintIcon /></IconButton>
              <IconButton aria-label="Print setup"><PrintSetupIcon /></IconButton>
              <IconButton aria-label="Print preview"><PreviewIcon /></IconButton>
            </ToolRow>
            <Canvas>
              <Panel>
                <PanelTop>
                  <Bevel $small $face="#8a8a8a" $lit="#d0d0d0" $shade="#4c4c4c"><span><span>Menu główne</span></span></Bevel>
                </PanelTop>
                <PanelGrid>
                  <ArrowButton aria-label="Previous"><Ico s={15}><path d="M.8 7.500 13.500 1 11.500 7.500l2 6.500z" fill="#c8c800" stroke="#222" /></Ico></ArrowButton>
                  <ButtonStack>
                    {reports.map((g) => (
                      <ButtonGroup key={g.names[0]}>
                        {g.names.map((n) => <Bevel key={n} {...g.tone}><span><span>{n}</span></span></Bevel>)}
                      </ButtonGroup>
                    ))}
                  </ButtonStack>
                </PanelGrid>
              </Panel>
              <Clock><ClockFace /></Clock>
              <TitleBlock>
                <Cell $w={157}><Rule /></Cell>
                <Cell $w={150}><SheetName>Menu<br />Raporty</SheetName></Cell>
                <Cell>
                  <Summary>
                    <Heading><Site>MCK Katowice</Site>Raporty zużycia mediów</Heading>
                    <Gauge><GaugeBox>11.9 °C</GaugeBox>Aktualna Tzewn</Gauge>
                  </Summary>
                  <Logos>
                    <Warbud><Ico s={20} w={12}><path d="M11 2 2.500 10l8.500 8" stroke="#2f7cc4" strokeWidth="2.500" /></Ico>warbud</Warbud>
                    <Coral>CORAL<small>www.coral.com.pl</small></Coral>
                    <Schneider>Schneider<small><Ico s={8}><circle cx="3.500" cy="4.500" r="2.500" stroke="#0a9628" strokeWidth="1.500" /><path d="m1 7.500 6-7" stroke="#0a9628" /></Ico>Electric</small></Schneider>
                  </Logos>
                </Cell>
              </TitleBlock>
            </Canvas>
            <AlarmPane>
              <PaneTitle>
                <h2>Alarms</h2>
                <button aria-label="Pane menu"><Caret c="#0b2a6b" /></button>
                <button aria-label="Pin"><Ico s={11} w={9}><path d="M2.500.5h4v6h-4zM.5 6.500h8M4.500 7v4" stroke="#0b2a6b" /><path d="M6 1v5" stroke="#0b2a6b" /></Ico></button>
                <button aria-label="Close pane"><Ico s={9}><path d="m.5.5 8 8m0-8-8 8" stroke="#0b2a6b" strokeWidth="1.200" /></Ico></button>
              </PaneTitle>
              <PaneTools $pad={4} $height={38}>
                <IconButton aria-label="Acknowledge"><CheckIcon /></IconButton>
                <Divider />
                <IconButton $dim aria-label="Assign"><AckIcon /></IconButton>
                <IconButton aria-label="Silence"><BellIcon /></IconButton>
                <Divider />
                <IconButton $dim aria-label="Note"><NoteIcon /></IconButton>
                <IconButton aria-label="Remove note"><NoteIcon banned /></IconButton>
                <Divider />
                <IconButton aria-label="Comment"><CommentIcon /></IconButton>
                <IconButton aria-label="Cause"><BookIcon kind="fire" /></IconButton>
                <IconButton aria-label="Action"><BookIcon kind="tool" /></IconButton>
                <IconButton $dim aria-label="Checklist"><BookIcon kind="list" /></IconButton>
                <Divider $wide />
                <IconButton aria-label="Show silenced"><EyeIcon /></IconButton>
                <IconButton aria-label="Show hidden"><EyeIcon note /></IconButton>
                <Divider />
                <IconButton $dim aria-label="Go to"><RedoIcon /></IconButton>
                <Divider />
                <IconButton aria-label="Filter alarms"><FunnelIcon /></IconButton>
                <IconButton aria-label="Favorites"><StarIcon /></IconButton>
                <CaretButton aria-label="Favorites list"><Caret /></CaretButton>
                <Divider $wide />
                <TextBox $w={100} placeholder="Quick filter" aria-label="Quick filter" />
              </PaneTools>
              <ListArea>
                <TableWrap>
                  <Table>
                    <thead>
                      <tr>
                        {columns.map((c) => (
                          <Th key={c.name} $w={c.w}>
                            <span>{c.name}{c.sort && <Ico s={5} w={9}><path d={c.sort === "up" ? "M0 5h9L4.500 0z" : "M0 0h9L4.500 5z"} fill="#9cc3f5" /></Ico>}</span>
                          </Th>
                        ))}
                      </tr>
                    </thead>
                    <tbody>
                      {rows.map((r) => (
                        <Row key={r.kind} $kind={r.kind}>
                          <td><BellIcon s={16} fill="url(#flame)" edge={r.kind === "critical" ? "#fff" : "#c8582a"} /></td>
                          {r.cells.map((c, i) => <td key={i}>{c}</td>)}
                        </Row>
                      ))}
                      <Row $kind="ok"><td colSpan={11}><OkMark><CheckIcon /></OkMark></td></Row>
                    </tbody>
                  </Table>
                  <CountTip>38 alarms</CountTip>
                </TableWrap>
                <Scroll>
                  <ScrollPart $h={17} aria-label="Scroll up"><Ico s={4} w={7}><path d="M0 4h7L3.500 0z" fill="#4d6185" /></Ico></ScrollPart>
                  <ScrollPart $h={8} aria-label="Scroll thumb" />
                  <Spacer />
                  <ScrollPart $h={17} aria-label="Scroll down"><Ico s={4} w={7}><path d="M0 0h7L3.500 4z" fill="#4d6185" /></Ico></ScrollPart>
                </Scroll>
                <DetailStrip>
                  <DetailToggle aria-label="Expand details"><Ico s={8} w={6}><path d="M5 .5 1.500 4 5 7.500" stroke="#111" strokeWidth="1.800" /></Ico></DetailToggle>
                  <DetailLabel>Detail view</DetailLabel>
                </DetailStrip>
              </ListArea>
            </AlarmPane>
            <BottomTabs>
              <BottomTab $on>Alarms</BottomTab>
              <BottomTab>Events</BottomTab>
              <BottomTab>Watch</BottomTab>
            </BottomTabs>
          </Content>
        </Body>
        <StatusBar>
          <StatusIcons><LockIcon /><OkIcon /></StatusIcons>
          <StatusItem><span>Connected to:</span><span>MCK_ES</span></StatusItem>
          <StatusItem><span>User account:</span><span>admin</span></StatusItem>
          <StatusItem><span>Domain:</span><span>Local</span></StatusItem>
          <Spacer />
          <Picker><select aria-label="Language"><option>English</option></select><Caret /></Picker>
          <Picker><select aria-label="Units"><option>As MS Windows (Metric)</option></select><Caret /></Picker>
        </StatusBar>
      </Workstation>
      <Taskbar>
        <Orb aria-label="Start"><StartOrb /></Orb>
        <Tasks>
          <Task><Firefox />In...</Task>
          <Task><Outlook />Sk...</Task>
          <Task $bare aria-label="Clover"><Clover /></Task>
          <Task><Notes />Sti...</Task>
          <Task><Bolt />Cr...</Task>
          <Task><TeamViewer />Te...</Task>
          <Task $joined><TeamViewer />V...</Task>
          <Task $front><Puzzle s={16} />M...</Task>
        </Tasks>
        <Tray>
          <TrayText>PL</TrayText>
          <Ico s={14} w={16}><path d="M1 5.500h14v7H1z" fill="#9a9a94" stroke="#e8e4da" /><path d="M3 8h10M3 10.500h10" stroke="#e8e4da" strokeDasharray="1 1" /><path d="M6 5q0-3 4-3t3-2" stroke="#6e6a64" /></Ico>
          <Ico s={10} w={16}><path d="M8 1v8L3 5z" fill="#fff" /></Ico><span />
          <Ico s={16}><path d="m4.500 1 3.500 2.500L4.500 6 1 3.500zM11.500 1 15 3.500 11.500 6 8 3.500zM4.500 6 8 8.500 4.500 11 1 8.500zM4 12l4-3 4 3-4 3z" fill="#fff" stroke="#555" strokeWidth=".5" /><circle cx="11.500" cy="11.500" r="4.300" fill="#2fae2c" stroke="#fff" strokeWidth=".6" /><path d="m9.500 11.500 1.500 2 2.500-4" stroke="#fff" strokeWidth="1.200" /></Ico>
          <Ico s={14} w={16}><path d="M1 10h2v3H1zM4 8h2v5H4zM7 6h2v7H7zM10 4h2v9h-2zM13 1h2v12h-2z" fill="#fff" /></Ico>
          <Ico s={16}><path d="M2 2h6v12H2z" fill="#8393a9" stroke="#fff" strokeWidth="1.500" /><path d="M8 4V1m4 3V1" stroke="#fff" strokeWidth="1.500" /><path d="M6 4.500h8V8l-3 2.500H9L6 8z" fill="#fff" /><path d="M10 10v4H6" stroke="#fff" strokeWidth="1.500" /></Ico>
          <Ico s={16}><path d="M2.500 1v15" stroke="#fff" strokeWidth="1.800" /><path d="M3 2h6l1 1.500h5L12.500 7l1 2.500H9L8 8H3z" fill="#c8cdd2" stroke="#fff" /></Ico>
        </Tray>
        <Stamp><span>10:37</span><span>2016-10-24</span></Stamp>
        <Peek aria-label="Show desktop" />
      </Taskbar>
    </Screen>
  );
}
